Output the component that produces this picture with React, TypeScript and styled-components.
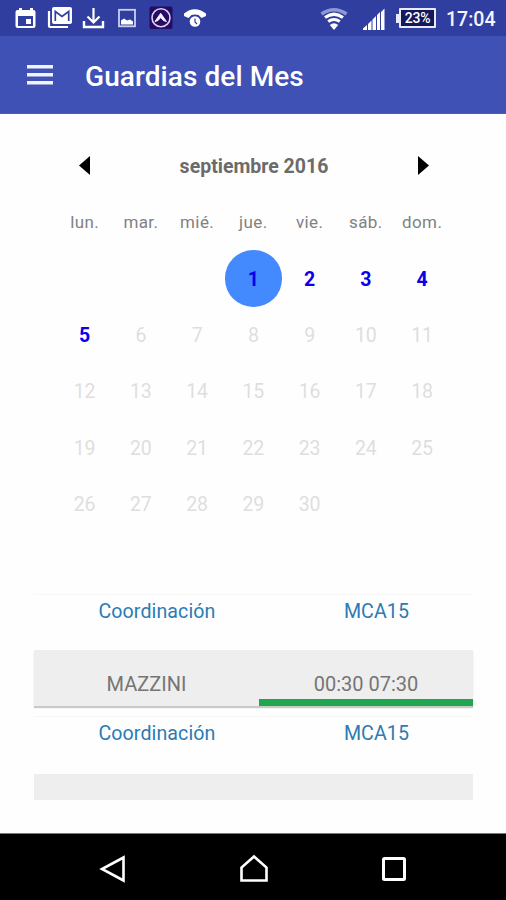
import React from "react";
import styled, { createGlobalStyle } from "styled-components";

const GlobalStyle = createGlobalStyle`
  * { box-sizing: border-box; }
  html, body { margin: 0; padding: 0; background: #fefefe; }
  body { font-family: Roboto, "Liberation Sans", sans-serif; }
`;

const Screen = styled.div`
  width: 506px;
  height: 900px;
  display: flex;
  flex-direction: column;
  background: #fefefe;
  overflow: hidden;
`;

const StatusBar = styled.div`
  height: 36px;
  flex: none;
  display: flex;
  justify-content: space-between;
  padding: 0 10px 0 14px;
  background: #303f9f;
`;

const IconGroup = styled.div`
  display: flex;
`;

const StatusIcon = styled.svg<{ $gap?: number }>`
  display: block;
  height: 36px;
  margin-left: ${(p) => p.$gap ?? 0}px;
`;

const Battery = styled.div`
  display: flex;
  align-items: center;
  margin: 8px 0 0 11px;
  height: 20px;
`;

const BatteryTip = styled.span`
  width: 3px;
  height: 9px;
  background: #e8eaf8;
`;

const BatteryBody = styled.span`
  width: 37px;
  height: 20px;
  border: 2px solid #e8eaf8;
  border-radius: 1px;
  background: #14195c;
  color: #fff;
  font-size: 14px;
  font-weight: 500;
  line-height: 16px;
  letter-spacing: -0.2px;
  text-align: center;
`;

const Clock = styled.span`
  margin-left: 10px;
  width: 50px;
  line-height: 39px;
  font-size: 19.5px;
  font-weight: 500;
  color: #f4f5ff;
  white-space: nowrap;
`;

const AppBar = styled.header`
  height: 78px;
  flex: none;
  display: flex;
  align-items: center;
  padding-left: 27px;
  background: #3f51b5;
  border-bottom: 1px solid #4d5cb2;
`;

const MenuButton = styled.button`
  width: 26px;
  height: 20px;
  margin: 0;
  padding: 0;
  border: 0;
  background: none;
  svg { display: block; }
`;

const Title = styled.h1`
  margin: 5px 0 0 32px;
  font-size: 28px;
  font-weight: 500;
  line-height: 36px;
  letter-spacing: 0.08px;
  color: #fff;
  white-space: nowrap;
`;

const Content = styled.main`
  flex: 1;
  display: flex;
  flex-direction: column;
`;

const Calendar = styled.section`
  width: 394px;
  margin: 24px 0 0 56.5px;
`;

const MonthBar = styled.div`
  height: 56px;
  display: flex;
  align-items: center;
  justify-content: space-between;
  padding: 0 21px 0 22px;
`;

const MonthName = styled.h2`
  margin: 1px 0 0;
  font-size: 19.5px;
  font-weight: 700;
  color: #6b6b6b;
`;

const Arrow = styled.svg`
  display: block;
`;

const Days = styled.div`
  display: grid;
  grid-template-columns: repeat(7, 56.25px);
  grid-auto-rows: 56.25px;
`;

const Weekday = styled.span`
  display: flex;
  align-items: center;
  justify-content: center;
  font-size: 17px;
  letter-spacing: 0.4px;
  color: #818181;
`;

const Day = styled.span<{ $active: boolean; $selected: boolean; $offset?: number }>`
  ${(p) => (p.$offset ? `grid-column-start: ${p.$offset};` : "")}
  display: flex;
  align-items: center;
  justify-content: center;
  border-radius: 50%;
  padding-top: 2px;
  background: ${(p) => (p.$selected ? "#448aff" : "transparent")};
  color: ${(p) => (p.$active ? "#0b00ea" : "#dedede")};
  font-size: 19.5px;
  font-weight: ${(p) => (p.$active ? 700 : 400)};
`;

const Shifts = styled.section`
  width: 439px;
  margin: 62.5px 0 0 34px;
`;

const ShiftHeader = styled.div<{ $height: number }>`
  height: ${(p) => p.$height}px;
  display: grid;
  grid-template-columns: 246px 193px;
  border-top: 1px solid #f7f7f7;
  color: #2b7bb5;
  font-size: 19.6px;
  line-height: 33px;
  letter-spacing: 0.1px;
  text-align: center;
`;

const ShiftRow = styled.div<{ $partial?: boolean }>`
  height: ${(p) => (p.$partial ? 26 : 56)}px;
  display: grid;
  grid-template-columns: 225px 214px;
  margin-bottom: 10px;
  background: #eeeeee;
  box-shadow: ${(p) => (p.$partial ? "none" : "0 2px 1px #c9c9c9")};
  color: #757575;
  font-size: 20px;
  line-height: 68px;
  text-align: center;
`;

const Cell = styled.span<{ $marked?: boolean }>`
  height: 56px;
  border-bottom: ${(p) => (p.$marked ? "7px solid #21a650" : "0")};
`;

const NavigationBar = styled.nav`
  height: 67px;
  flex: none;
  display: grid;
  grid-template-columns: 32px 32px 32px;
  justify-content: center;
  align-items: center;
  column-gap: 108.5px;
  padding: 4px 0 0 1px;
  background: #000;
  border-top: 1px solid #777;
`;

const weekdays = ["lun.", "mar.", "mié.", "jue.", "vie.", "sáb.", "dom."];
const days = Array.from({ length: 30 }, (_, i) => i + 1);

function NotificationIcons() {
  return (
    <IconGroup>
      <StatusIcon width="23" viewBox="0 0 23 36" fill="none">
        <path fillRule="evenodd" fill="#fff" d="M3.5 10H5V8h3v2h8V8h3v2h.5q2 0 2 2v14q0 2-2 2h-16q-2 0-2-2V12q0-2 2-2ZM4 16v10h15V16Z" />
        <path fill="#fff" d="M12 19h5v5h-5z" />
      </StatusIcon>
      <StatusIcon $gap={9} width="27" viewBox="0 0 27 36" fill="none">
        <path d="M3 11v15q0 1 1 1h18" stroke="#fff" strokeWidth="2.2" />
        <rect x="6" y="7" width="20" height="17" rx="2" fill="#fff" />
        <path d="M9.3 21V11.5l6.7 5 6.7-5V21" stroke="#303f9f" strokeWidth="1.7" />
      </StatusIcon>
      <StatusIcon $gap={9} width="23" viewBox="0 0 23 36" fill="none" stroke="#fff">
        <path d="M11.5 8v14M5.5 16.5l6 6 6-6" strokeWidth="2.2" />
        <path d="M2 21v6h19v-6" strokeWidth="2.4" />
      </StatusIcon>
      <StatusIcon $gap={13} width="18" viewBox="0 0 18 36" fill="none">
        <rect x="1" y="9.8" width="16" height="16.5" stroke="#c9cff2" strokeWidth="1.8" />
        <path d="M3 24.5V20.5l3-2 3 2 3-1 3 2v3Z" fill="#fff" />
      </StatusIcon>
      <StatusIcon $gap={13} width="24" viewBox="0 0 24 36" fill="none">
        <rect x=".5" y="6.5" width="23" height="22.5" rx="2" fill="#250b65" />
        <circle cx="12" cy="17.8" r="9" stroke="#d8d2eb" strokeWidth="1.6" />
        <path d="m6 21.5 5.7-8.2 5.7 8.2-3-1-2.7-3-2.7 3Z" fill="#f5f2ff" stroke="#f5f2ff" strokeLinejoin="round" />
      </StatusIcon>
      <StatusIcon $gap={10} width="24" viewBox="0 0 24 36" fill="none">
        <path d="M1 16v-2.5Q11.5 5 23 13.5V16l-4.5 2-3-3q-3.500-1-7 0l-3 3Z" fill="#fff" />
        <circle cx="12" cy="21.5" r="5.3" fill="#fff" />
        <path d="M12 18.5v3.500l2 2" stroke="#303f9f" strokeWidth="1.2" />
      </StatusIcon>
    </IconGroup>
  );
}

function SystemIcons() {
  return (
    <IconGroup>
      <StatusIcon width="28" viewBox="0 0 28 36" fill="none">
        <path d="M1.5 14Q14 5.500 26.5 14" stroke="#8d98d4" strokeWidth="3.6" />
        <path d="M5 17.5Q14 11 23 17.5" stroke="#fff" strokeWidth="3.2" />
        <path d="M8.2 21.5Q14 17.5 19.8 21.5" stroke="#fff" strokeWidth="3" />
        <path d="M9.8 25Q14 21.5 18.2 25L14 30Z" fill="#fff" />
      </StatusIcon>
      <StatusIcon $gap={14} width="23" viewBox="0 0 23 36" fill="#fff">
        <path d="M1 28.5 5 25v5H1ZM6 24l3.5-3.5V30H6ZM10.5 19.5 14 16v14h-3.5ZM15 15l3-3v18h-3ZM19 12l3.5-3.5V30H19Z" />
      </StatusIcon>
      <Battery>
        <BatteryTip />
        <BatteryBody>23%</BatteryBody>
      </Battery>
      <Clock>17:04</Clock>
    </IconGroup>
  );
}

export default function App() {
  return (
    <>
      <GlobalStyle />
      <Screen>
        <StatusBar>
          <NotificationIcons />
          <SystemIcons />
        </StatusBar>
        <AppBar>
          <MenuButton aria-label="Menú">
            <svg width="26" height="20" viewBox="0 0 26 20" fill="#f1f3ff">
              <path d="M0 0h26v3.5H0ZM0 8h26v3.5H0ZM0 16h26v3.5H0Z" />
            </svg>
          </MenuButton>
          <Title>Guardias del Mes</Title>
        </AppBar>
        <Content>
          <Calendar>
            <MonthBar>
              <Arrow width="11" height="20" viewBox="0 0 11 20"><path d="M11 0v19L0 9.5Z" /></Arrow>
              <MonthName>septiembre 2016</MonthName>
              <Arrow width="11" height="20" viewBox="0 0 11 20"><path d="m0 0 11 9.5L0 19Z" /></Arrow>
            </MonthBar>
            <Days>
              {weekdays.map((d) => <Weekday key={d}>{d}</Weekday>)}
              {days.map((d) => (
                <Day key={d} $active={d <= 5} $selected={d === 1} $offset={d === 1 ? 4 : undefined}>
                  {d}
                </Day>
              ))}
            </Days>
          </Calendar>
          <Shifts>
            <ShiftHeader $height={56}>
              <span>Coordinación</span>
              <span>MCA15</span>
            </ShiftHeader>
            <ShiftRow>
              <Cell>MAZZINI</Cell>
              <Cell $marked>00:30 07:30</Cell>
            </ShiftRow>
            <ShiftHeader $height={58}>
              <span>Coordinación</span>
              <span>MCA15</span>
            </ShiftHeader>
            <ShiftRow $partial />
          </Shifts>
        </Content>
        <NavigationBar>
          <svg width="32" height="32" viewBox="0 0 32 32" fill="none" stroke="#fff" strokeWidth="2.6">
            <path d="M26.5 4.5v23L5 16Z" />
          </svg>
          <svg width="32" height="32" viewBox="0 0 32 32" fill="none" stroke="#fff" strokeWidth="2.6">
            <path d="M3.5 27.5V14.5L16 3.5l12.5 11v13Z" />
          </svg>
          <svg width="32" height="32" viewBox="0 0 32 32" fill="none" stroke="#fff" strokeWidth="3">
            <rect x="5.5" y="5.5" width="21" height="21" rx="1" />
          </svg>
        </NavigationBar>
      </Screen>
    </>
  );
}
